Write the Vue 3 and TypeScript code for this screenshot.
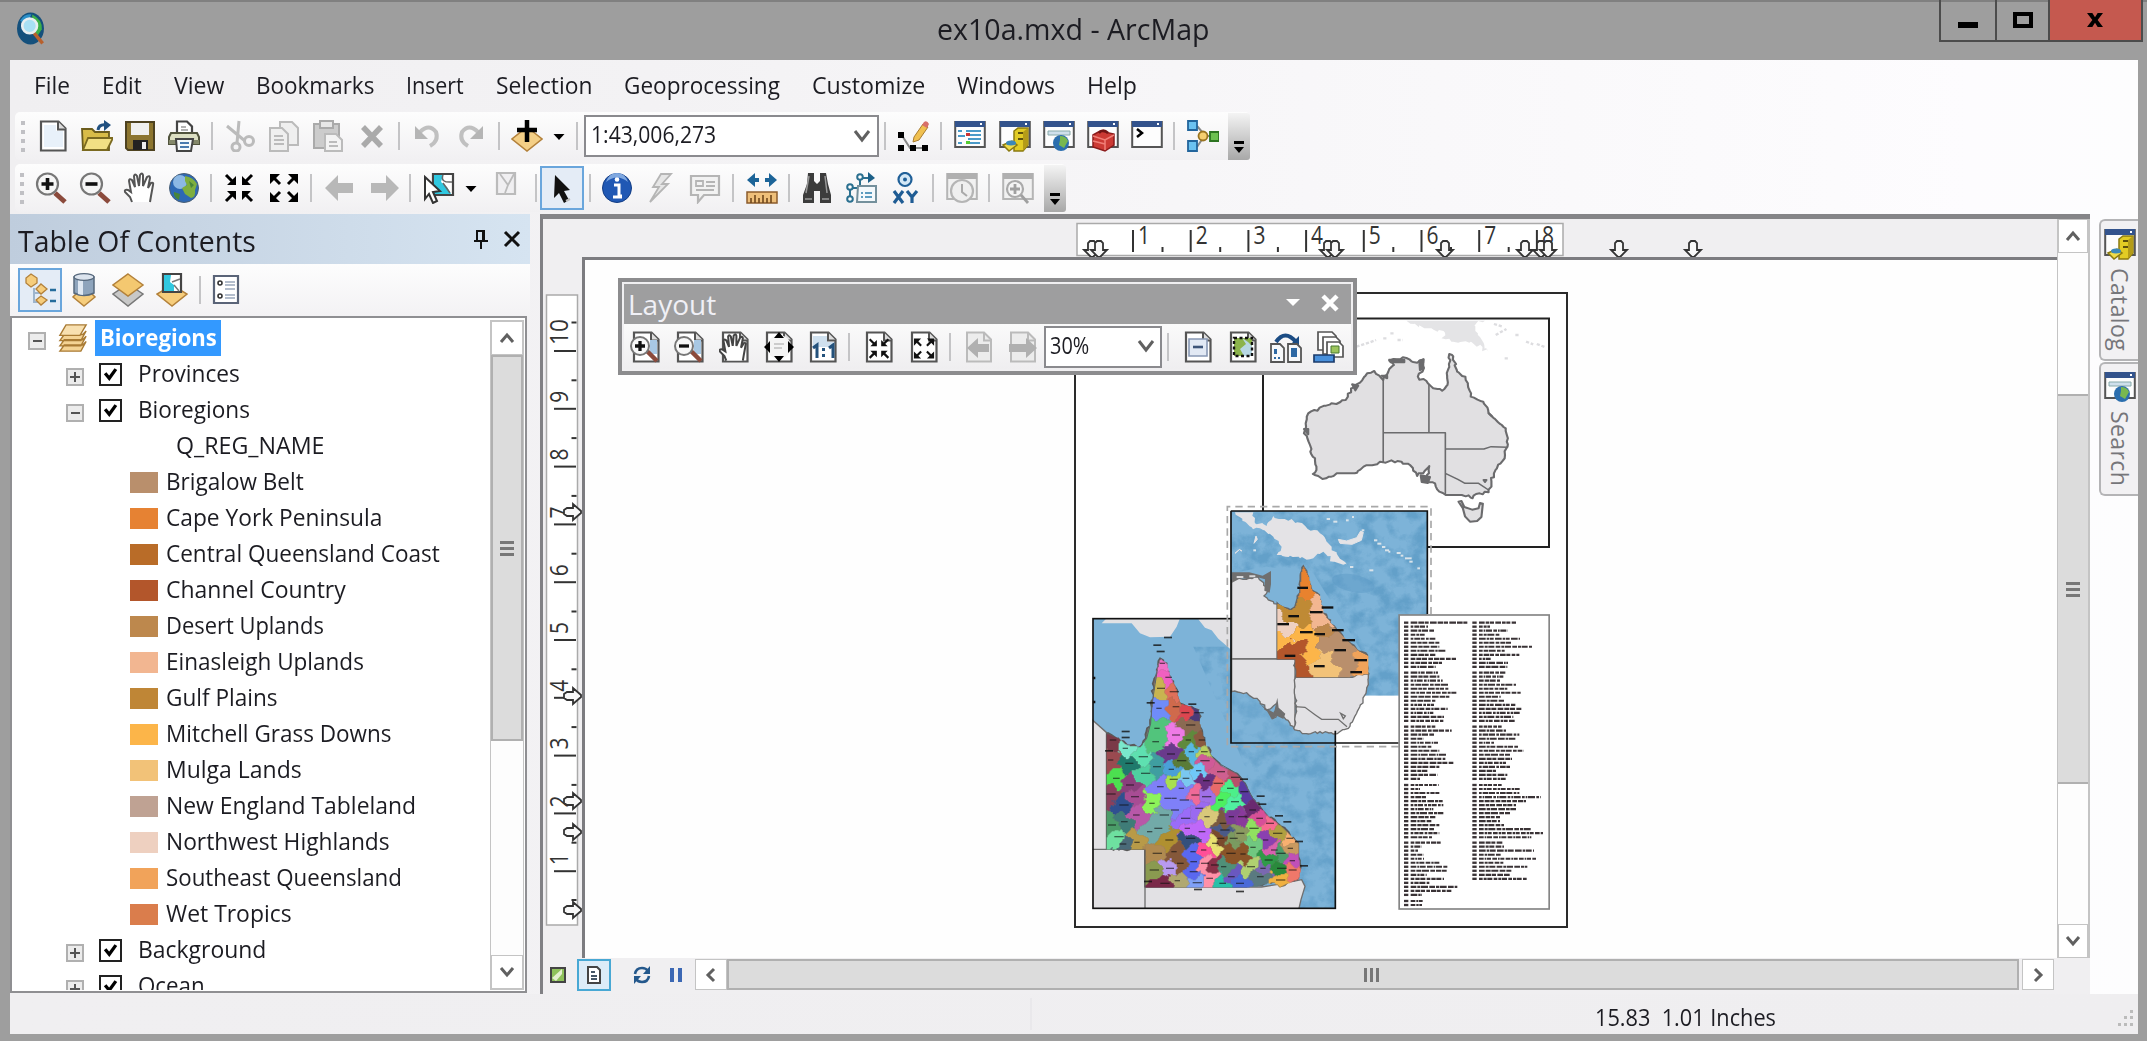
<script setup lang="ts">
type Item = [string, number]
type Pt = [number, number]
type Seed = [number, number, string]

// Squeezes a label horizontally so that it takes exactly the given width.
const vFit = {
  mounted(el: HTMLElement, b: { value: number }) {
    const w = el.offsetWidth
    if (w) el.style.transform = `scaleX(${b.value / w})`
  },
}

const menus: Item[] = [
  ['File', 36], ['Edit', 40], ['View', 50], ['Bookmarks', 118], ['Insert', 58],
  ['Selection', 96], ['Geoprocessing', 156], ['Customize', 113], ['Windows', 98], ['Help', 50],
]

const page = '<path d="M4 1.5h17.500l7 7V30.500H4z" fill="#fff" stroke="#555" stroke-width="2.200"/><path d="M21 1.500v8h8" fill="#ddd" stroke="#555" stroke-width="2"/>'
const greyPage = '<path d="M4 1.500h17l7 7V30.500H4z" fill="#ececec" stroke="#bbb" stroke-width="2"/><path d="M21 1.500v8h7" fill="none" stroke="#bbb" stroke-width="2"/>'
const win = '<path d="M1.200 2h29.600v25H1.200z" fill="#fdfdfd" stroke="#555" stroke-width="2"/><path d="M1 1h30v6H1z" fill="#33538c"/><path d="M26 3h2v2h-2z" fill="#fff"/>'
const greyWin = '<path d="M1.200 2h29.600v25H1.200z" fill="#f1f1f1" stroke="#b5b5b5" stroke-width="2"/><path d="M1 1h30v6H1z" fill="#b0b0b0"/>'
const inArrows = (c: string) => `<g fill="${c}" stroke="${c}"><path d="M13 4v9H4z M19 4v9h9z M13 28v-9H4z M19 28v-9h9z" stroke="none"/><path d="M3 3l8 8M29 3l-8 8M3 29l8-8M29 29l-8-8" stroke-width="3"/></g>`
const outArrows = (c: string) => `<g fill="${c}" stroke="${c}"><path d="M2 2h10L2 12z M30 2H20l10 10z M2 30h10L2 20z M30 30H20l10-10z" stroke="none"/><path d="M4 4l8 8M28 4l-8 8M4 28l8-8M28 28l-8-8" stroke-width="3"/></g>`
const glass = (p: string) => `<path d="M20 21l10 9" stroke="#8b4a3c" stroke-width="5"/><circle cx="12.500" cy="12" r="10.500" fill="#f6f6f6" stroke="#777" stroke-width="2.200"/><path d="${p}" stroke="#111" stroke-width="3.600"/>`
const pageGlass = (p: string) => `<path d="M20 9h7v14h-7z" fill="#a8c8e4"/><path d="M17 20l10 10" stroke="#8b4a3c" stroke-width="4.500"/><circle cx="10" cy="15" r="9" fill="#f8f8f8" stroke="#777" stroke-width="2"/><path d="${p}" stroke="#111" stroke-width="3.300"/>`
const handShape = 'M9 30L7 25L2 20q-1-3 3-2l3 2L6 9q0-3 3-1l3 7L11 4q1-3 3 0l2 10L17 3q2-3 3 0v11L24 5q3-2 3 1L25 16L28 11q3-1 2 2L28 24l-1 6'
const globe = '<circle cx="16" cy="16" r="14.500" fill="#2d68b4" stroke="#4a5f74"/><circle cx="12" cy="10" r="7" fill="#a4ccf0" opacity=".8"/><path d="M17 4q8 1 12 8l-2 6q1 7-4 8l-6-4-3-6 5-3-2-4z" fill="#7eae3e"/><path d="M6 20l6 2-1 6q-6-3-5-8zM21 9l5 4-3 3z" fill="#48853a"/>'
const cabinet = '<path d="M15 11l4-3h10v17l-5 6h-9z" fill="#e2cc24" stroke="#8a7a10" stroke-width="1.500"/><path d="M19 13h5M19 19h5" stroke="#5c500c" stroke-width="2"/><path d="M24 12l5-4v17l-5 6z" fill="#b49c18"/><path d="M4 25l9-4 5 4-8 6z" fill="#f0dc48" stroke="#8a7a10" stroke-width="1.500"/><ellipse cx="12" cy="23" rx="5" ry="2.500" fill="#3c88b8"/>'
const smallGlobe = '<circle cx="18" cy="23" r="8" fill="#2c6fae"/><path d="M17 16q6 0 8 5l-4 7-5-3 1-5z" fill="#78b850"/>'

const icons: Record<string, string> = {
  new: page + '<path d="M7 5h12v6h7v16H7z" fill="#e8f1fa"/>',
  open: '<path d="M1 9h10l3 3h14v18H2z" fill="#d8bc48" stroke="#6b5c1c" stroke-width="1.800"/><path d="M7 18h25l-6 12H2z" fill="#f2e084" stroke="#7b6a20" stroke-width="1.800"/><path d="M17 10q1-6 8-5" fill="none" stroke="#205080" stroke-width="3"/><path d="M23 0l7 5-7 6z" fill="#205080"/>',
  save: '<path d="M2 2h28v28H4l-2-2z" fill="#8c7530" stroke="#4e4220" stroke-width="2"/><path d="M7 3h18v12H7z" fill="#f0f0ee"/><path d="M9 20h15v10H9z" fill="#222"/><path d="M18 22h4v7h-4z" fill="#eee"/>',
  print: '<path d="M9 13V1.500h10l5 5V13" fill="#fff" stroke="#444" stroke-width="2.200"/><path d="M13 7h5M13 10h7" stroke="#999" stroke-width="1.500"/><path d="M3 13h26l2 4v7H1v-7z" fill="#dcdfc2" stroke="#50533c" stroke-width="2"/><path d="M1 20h30v4H1z" fill="#84886a"/><path d="M8 19h17l-2 12H9z" fill="#f6fafd" stroke="#444" stroke-width="2"/><path d="M12 23h9M12 27h9" stroke="#4a7bb0" stroke-width="2"/>',
  cut: '<g fill="none" stroke="#bbb" stroke-width="3"><path d="M3 6l18 15M15 1l-2 22"/><circle cx="12" cy="27" r="4"/><circle cx="25" cy="21" r="4.500"/></g>',
  copy: '<g fill="#efefef" stroke="#bbb" stroke-width="2"><path d="M12 2h12l6 6v17H12z"/><path d="M2 8h12l6 6v17H2z"/><path d="M6 16h9M6 20h10M6 24h10"/></g>',
  paste: '<path d="M2 4h25v24H2z" fill="#ccc" stroke="#aaa" stroke-width="2"/><path d="M8 1h13v7H8z" fill="#e8e8e8" stroke="#aaa" stroke-width="2"/><path d="M13 14h11l6 6v11H13z" fill="#f3f3f3" stroke="#bbb" stroke-width="2"/><path d="M17 22h8M17 26h9" stroke="#bbb" stroke-width="2"/>',
  del: '<path d="M7 7l18 19M25 7L7 26" stroke="#aaa" stroke-width="5.500"/>',
  undo: '<path d="M9 12q9-9 16 0q3 9-6 14" fill="none" stroke="#c0c0c0" stroke-width="4"/><path d="M4 6v13h13z" fill="#b5b5b5"/>',
  redo: '<path d="M23 12q-9-9-16 0q-3 9 6 14" fill="none" stroke="#c0c0c0" stroke-width="4"/><path d="M28 6v13H15z" fill="#b5b5b5"/>',
  add: '<path d="M16 7l15 12-15 12L1 19z" fill="#f4cf86" stroke="#b3813a" stroke-width="1.500"/><path d="M16 0v22M6 10h20" stroke="#000" stroke-width="4.500"/>',
  drop: '<path d="M10.500 14h11l-5.500 6z" fill="#000"/>',
  edit: '<path d="M4 14l9 14h16" fill="none" stroke="#888" stroke-width="2"/><path d="M1 12h6v6H1zM1 25h6v6H1zM13 25h6v6h-6zM25 25h6v6h-6z" fill="#000"/><path d="M17 17l9-13 5 3-9 13-6 2z" fill="#f0c050" stroke="#a87c30"/><path d="M27 2q3-2 5 2l-2 4-5-3z" fill="#d8706a"/>',
  toc: win + '<path d="M4 11h4M4 16h7M4 23h4" stroke="#4a9ac8" stroke-width="2"/><path d="M12 11h15M14 15h13M14 19h13M14 23h12" stroke="#4a9ac8" stroke-width="1.800"/><path d="M12 13h4v3h-4z" fill="#c33"/><path d="M12 21h4v3h-4z" fill="#5c3"/>',
  catalog: win + cabinet,
  search: win + '<path d="M5 11h22v4H5z" fill="#cfe0ec" stroke="#8aa" />' + smallGlobe,
  toolbox: win + '<path d="M6 15l7-4 14 3v11l-9 6-12-4z" fill="#cc3a34" stroke="#8c1c1c" stroke-width="1.500"/><path d="M6 16l12 4 9-5M18 20v10M6 21l12 3" fill="none" stroke="#f08078" stroke-width="1.500"/><path d="M12 13q4-5 9 0" fill="none" stroke="#701414" stroke-width="2.500"/>',
  python: win + '<path d="M6 9l5 4-5 4" fill="none" stroke="#000" stroke-width="2.500"/>',
  model: '<path d="M10 6l6 7M10 27l6-9M18 16h8" stroke="#888" stroke-width="2"/><path d="M1 1h9v9H1zM1 21h9v10H1z" fill="#6bc2f0" stroke="#22659c" stroke-width="1.800"/><circle cx="16" cy="16" r="4.500" fill="#f5cf70" stroke="#9a7420" stroke-width="1.800"/><path d="M23 12h9v9h-9z" fill="#6cc050" stroke="#2c7420" stroke-width="1.800"/>',
  zin: glass('M12.500 6v12M6.500 12h12'),
  zout: glass('M6.500 12h12'),
  hand: `<path d="${handShape}" fill="#fff" stroke="#555" stroke-width="2"/>`,
  globe,
  fixin: inArrows('#000'),
  fixout: outArrows('#000'),
  back: '<path d="M1 16L14 3v8h15v10H14v8z" fill="#b8b8b8"/>',
  fwd: '<path d="M31 16L18 3v8H3v10h15v8z" fill="#b8b8b8"/>',
  selfeat: '<path d="M10 2h20v21H10z" fill="#fff" stroke="#444" stroke-width="2.200"/><path d="M11 3h9l-2 7 6 5 4 7H11z" fill="#30c8e0"/><path d="M20 3q-3 8 9 7M20 11l7 10" fill="none" stroke="#666" stroke-width="1.500"/><path d="M2 5l15 14-7 1 4 9-4 2-4-9-4 5z" fill="#fff" stroke="#333" stroke-width="2"/>',
  clear: '<path d="M7 1h18v21H7z" fill="#f0eff1" stroke="#bbb" stroke-width="2.200"/><path d="M10 2l8 11 6-11M18 13l-3 8" fill="none" stroke="#bbb" stroke-width="1.800"/>',
  cursor: '<path d="M9 3l15 15-6 1 5 9-5 3-5-10-5 5z" fill="#111"/><path d="M20 29l4-2" stroke="#bbb" stroke-width="2"/>',
  info: '<circle cx="16" cy="16" r="14.500" fill="#2058b4" stroke="#123c84"/><path d="M5 10q11-9 22 0-3-9-11-9T5 10" fill="#7fa8e0"/><path d="M13 13h5v11h3M12 25h9" fill="none" stroke="#fff" stroke-width="3"/><circle cx="16" cy="7.500" r="2.300" fill="#fff"/>',
  bolt: '<path d="M26 2H16L8 15h6L5 30l18-18h-6z" fill="#e6e6e6" stroke="#b5b5b5" stroke-width="1.800"/>',
  popup: '<path d="M2 4h28v19H15l-6 7v-7H2z" fill="#f2f2f2" stroke="#b5b5b5" stroke-width="2.200"/><path d="M7 9h7v5H7zM17 10h9M17 14h9M7 18h18" fill="none" stroke="#b5b5b5" stroke-width="1.800"/>',
  measure: '<path d="M1 20h30v11H1z" fill="#eebf7a" stroke="#8c5c2c" stroke-width="1.500"/><path d="M5 31v-5M9 31v-8M13 31v-5M17 31v-8M21 31v-5M25 31v-8" stroke="#70481c" stroke-width="1.600"/><path d="M1 8l8-7v5h4v4H9v5zM31 8l-8-7v5h-4v4h4v5z" fill="#1c6498"/>',
  find: '<path d="M7 1h6v8l3 3 3-3V1h6l2 11 3 11v8H19V19h-6v12H2v-8l4-11z" fill="#3c3c3c"/><path d="M8 4l-3 17M24 4l2 17M4 27h7M21 27h7" stroke="#999" stroke-width="1.500"/>',
  route: '<path d="M4 25v-9h10V6h9" fill="none" stroke="#2b7090" stroke-width="2"/><path d="M22 0l7 6-7 5z" fill="#1c6088"/><g fill="#fff" stroke="#2b7090" stroke-width="2"><circle cx="4" cy="15" r="2.800"/><circle cx="4" cy="27" r="2.800"/><circle cx="14" cy="5" r="2.800"/></g><path d="M12 14h18v16H11z" fill="#f4f9fc" stroke="#74909c" stroke-width="2"/><path d="M15 21h2M19 21h7M15 25h2M19 25h7" stroke="#5c9cc0" stroke-width="2"/>',
  xy: '<circle cx="16" cy="7.500" r="6.500" fill="#d4e8f6" stroke="#206098" stroke-width="2.200"/><circle cx="16" cy="7.500" r="2" fill="#206098"/><path d="M5 19l9 12M14 19L5 31M18 19l5 6 5-6M23 25v6" fill="none" stroke="#1f5c94" stroke-width="3.200"/>',
  time: greyWin + '<circle cx="16" cy="19" r="11" fill="#efefef" stroke="#b5b5b5" stroke-width="2.200"/><path d="M16 12v8l5 4" fill="none" stroke="#aaa" stroke-width="2"/>',
  viewer: greyWin + '<circle cx="13" cy="17" r="8" fill="#f4f4f4" stroke="#aaa" stroke-width="2.200"/><path d="M13 12v10M8 17h10M19 23l7 8" stroke="#a0a0a0" stroke-width="2.800"/>',
  tlist: '<path d="M11 15v14h10M11 20h8" fill="none" stroke="#9db4cc" stroke-width="2"/><g fill="#f6cd7c" stroke="#b3813a" stroke-width="1.300"><path d="M8 1l6 4v5l-6 4-5-4V5zM18 11l6 5-6 5-5-5zM18 23l6 4-6 5-5-5z"/></g><path d="M27 17h6M27 28h6" stroke="#246c9c" stroke-width="2.600"/>',
  tsource: '<path d="M16 33l11-9-4-4H9l-4 4z" fill="#f6cd7c" stroke="#b3813a" stroke-width="1.500"/><path d="M6 4v16q10 5 20 0V4z" fill="#8ea4bc" stroke="#56687c" stroke-width="1.500"/><path d="M10 6v15q3 1 5 1V6z" fill="#dfe8f2"/><ellipse cx="16" cy="4" rx="10" ry="3.300" fill="#dce4ee" stroke="#56687c" stroke-width="1.300"/>',
  tvis: '<path d="M16 11l15 10-15 12L1 21z" fill="#c8c8c8" stroke="#777" stroke-width="1.500"/><path d="M16 1l15 11-15 11L1 12z" fill="#f4c870" stroke="#b3813a" stroke-width="1.500"/>',
  tsel: '<path d="M16 12l15 9-15 12L1 21z" fill="#f6cd7c" stroke="#b3813a" stroke-width="1.500"/><path d="M7 1h18v18H7z" fill="#fff" stroke="#444" stroke-width="2.200"/><path d="M8 2h7l-1 7 4 3v6H8z" fill="#30c8e0"/><path d="M16 9l8-3M18 12l5 6" stroke="#777" stroke-width="1.500"/>',
  topt: '<path d="M4 3h24v27H4z" fill="#fff" stroke="#5a6478" stroke-width="2.200"/><g fill="none" stroke="#333" stroke-width="1.600"><circle cx="10" cy="10" r="2"/><circle cx="10" cy="23" r="2"/></g><path d="M15 9h10M15 12h10M15 16h10M15 22h10M15 25h10" stroke="#9aa8bc" stroke-width="1.600"/>',
  pzin: page + pageGlass('M10 10v10M5 15h10'),
  pzout: page + pageGlass('M5 15h10'),
  phand: page + `<g transform="translate(-1 2) scale(.92)"><path d="${handShape}" fill="#fff" stroke="#444" stroke-width="2.200"/></g>`,
  pfull: page + '<circle cx="16" cy="16" r="12" fill="#f4f4f4"/><path d="M16 1l5 6H11zM16 31l5-6H11zM1 16l6-6v12zM31 16l-6-6v12z" fill="#000"/><path d="M11 13h10M11 17h8" stroke="#ccc" stroke-width="2"/>',
  p11: page + '<path d="M6 5h14v6h6v5H6z" fill="#cfe0ee"/><path d="M6 17l4-3v13M22 17l4-3v13" fill="none" stroke="#24527c" stroke-width="3"/><path d="M15 17h3v3h-3zM15 23h3v3h-3z" fill="#24527c"/>',
  pin: page + '<g transform="translate(4.500 6) scale(.72)">' + inArrows('#111') + '</g>',
  pout: page + '<g transform="translate(4.500 6) scale(.72)">' + outArrows('#111') + '</g>',
  pback: greyPage + '<path d="M4 17L15 7v6h11v8H15v6z" fill="#b0b0b0"/>',
  pfwd: greyPage + '<path d="M30 17L19 7v6H2v8h17v6z" fill="#b0b0b0"/>',
  pdraft: page + '<path d="M7 8h18v17H7z" fill="#e2e9f4" stroke="#8898b4" stroke-width="1.600"/><path d="M11 16h10" stroke="#3c5478" stroke-width="2.600"/>',
  pfocus: page + '<path d="M7 7h18v18H7z" fill="#8cb44c"/><path d="M15 7l4 6-6 5 4 7h8V15l-4-4z" fill="#b8d8e4"/><path d="M7 7h18v18H7z" fill="none" stroke="#111" stroke-width="2.400" stroke-dasharray="3 2.500"/>',
  pchange: '<path d="M6 11q9-13 20 0" fill="none" stroke="#1b4c84" stroke-width="4"/><path d="M29 5v10h-10z" fill="#1b4c84"/><path d="M1 13h9l4 4v14H1zM18 13h9l4 4v14H18z" fill="#f6f8fa" stroke="#555" stroke-width="1.800"/><path d="M4 18h3v5H4zM4 26h2v2H4zM8 26h2v2H8zM21 17h6v9h-6z" fill="#2c68a4"/>',
  pddp: '<path d="M5 1h14l4 4v14H5z" fill="#fff" stroke="#555" stroke-width="1.700"/><path d="M10 6h13l4 4v13H10z" fill="#fff" stroke="#555" stroke-width="1.700"/><path d="M14 11h12l4 4v11H14z" fill="#fff" stroke="#555" stroke-width="1.700"/><path d="M18 15h8v7h-8z" fill="#9cc45c" stroke="#487830"/><path d="M1 24h20v7H1z" fill="#4890dc" stroke="#1c3c6c" stroke-width="1.700"/>',
  layers: '<g fill="#f4d394" stroke="#a97b34" stroke-width="1.600"><path d="M1 31l5-7h21l4-4-6 11zM1 25l5-7h21l4-4-6 11zM1 19l5-7h21l4-4-6 11z"/><path d="M1 13L8 1h23l-7 12z" fill="#f8e0b0"/></g>',
}

const standard: Item[] = [
  ['new', 44], ['open', 43], ['save', 44], ['print', 44], ['|', 11], ['cut', 45], ['copy', 44], ['paste', 44], ['del', 44], ['|', 10],
  ['undo', 45], ['redo', 44], ['|', 12], ['add', 44], ['drop', 20], ['|', 15],
]
const standard2: Item[] = [
  ['|', 12], ['edit', 44], ['|', 12], ['toc', 46], ['catalog', 44], ['search', 44], ['toolbox', 44], ['python', 44], ['|', 10], ['model', 47],
]
const tools: Item[] = [
  ['zin', 44], ['zout', 44], ['hand', 44], ['globe', 46], ['|', 8], ['fixin', 48], ['fixout', 42], ['|', 12], ['back', 46], ['fwd', 41], ['|', 12],
  ['selfeat', 46], ['drop', 18], ['clear', 52], ['|', 8], ['cursor*', 44], ['|', 12], ['info', 42], ['bolt', 45], ['popup', 44], ['|', 12], ['measure', 45], ['|', 9],
  ['find', 47], ['route', 43], ['xy', 44], ['|', 12], ['time', 45], ['|', 10], ['viewer', 48],
]
const tocTools: Item[] = [['tlist*', 44], ['tsource', 44], ['tvis', 44], ['tsel', 44], ['|', 11], ['topt', 44]]
const layoutA: Item[] = [
  ['pzin', 44], ['pzout', 44], ['phand', 45], ['pfull', 44], ['p11', 44], ['|', 8], ['pin', 51], ['pout', 39], ['|', 14], ['pback', 44], ['pfwd', 43],
]
const layoutB: Item[] = [['|', 12], ['pdraft', 48], ['pfocus', 42], ['pchange', 43], ['pddp', 44]]

const regions: [string, string, number][] = [
  ['Brigalow Belt', '#b98f6c', 138], ['Cape York Peninsula', '#e68233', 216], ['Central Queensland Coast', '#b96c28', 274],
  ['Channel Country', '#b3562b', 180], ['Desert Uplands', '#bd884d', 158], ['Einasleigh Uplands', '#f2b691', 198],
  ['Gulf Plains', '#bf8636', 112], ['Mitchell Grass Downs', '#fcb549', 226], ['Mulga Lands', '#f2c278', 136],
  ['New England Tableland', '#bfa293', 250], ['Northwest Highlands', '#eed0c0', 224], ['Southeast Queensland', '#f1a35a', 236],
  ['Wet Tropics', '#da7d4c', 126],
]

const hTicks = Array.from({ length: 8 }, (_, i) => ({ n: i + 1, x: 1133 + i * 57.7 }))
const vTicks = Array.from({ length: 10 }, (_, i) => ({ n: 10 - i, y: 351 + i * 57.8 }))
const hMarks = [1092, 1099, 1328, 1335, 1445, 1525, 1541, 1548, 1619, 1693]
const vMarks = [512, 696, 801, 832, 910]

// Deterministic noise, so the map is the same on every load.
function rng(seed: number) {
  let s = seed
  return () => ((s = (s * 16807) % 2147483647) / 2147483647)
}
function pts(s: string): Pt[] {
  return s.trim().split(/\s+/).map((p) => p.split(',').map(Number) as Pt)
}
// Roughens a closed outline into a coastline.
function coast(s: string, amp = 5, seed = 7): string {
  const r = rng(seed)
  const p = pts(s)
  let d = ''
  p.forEach((a, i) => {
    const b = p[(i + 1) % p.length]
    const len = Math.hypot(b[0] - a[0], b[1] - a[1])
    const straight = a[0] === b[0] || a[1] === b[1]
    const n = straight ? 1 : Math.max(1, Math.round(len / 9))
    for (let k = 0; k < n; k++) {
      const j = k ? amp : 0
      const x = a[0] + ((b[0] - a[0]) * k) / n + (r() - 0.5) * 2 * j
      const y = a[1] + ((b[1] - a[1]) * k) / n + (r() - 0.5) * 2 * j
      d += (d ? 'L' : 'M') + x.toFixed(0) + ' ' + y.toFixed(0)
    }
  })
  return d + 'Z'
}
function inside(x: number, y: number, p: Pt[]): boolean {
  let c = false
  for (let i = 0, j = p.length - 1; i < p.length; j = i++) {
    if (p[i][1] > y !== p[j][1] > y && x < ((p[j][0] - p[i][0]) * (y - p[i][1])) / (p[j][1] - p[i][1]) + p[i][0]) c = !c
  }
  return c
}
// Fills an outline with cells coloured by the nearest region centre,
// bending the borders with smooth waves and a little grain.
function mosaic(outline: string, seeds: Seed[], step: number, noise: number) {
  const p = pts(outline)
  const r = rng(99)
  const xs = p.map((q) => q[0])
  const ys = p.map((q) => q[1])
  const out: Record<string, string> = {}
  for (let y = Math.min(...ys); y < Math.max(...ys); y += step) {
    let run = ''
    let start = 0
    for (let x = Math.min(...xs); x <= Math.max(...xs) + step; x += step) {
      let c = ''
      if (inside(x, y, p)) {
        const dx = noise * (Math.sin(y / 9 + x / 31) * 0.5 + Math.sin(y / 4.3) * 0.25 + (r() - 0.5) * 0.3)
        const dy = noise * (Math.sin(x / 8 + y / 27) * 0.5 + Math.sin(x / 4.7) * 0.25 + (r() - 0.5) * 0.3)
        let best = 1e9
        for (const s of seeds) {
          const d = (s[0] - x - dx) ** 2 + (s[1] - y - dy) ** 2
          if (d < best) { best = d; c = s[2] }
        }
      }
      if (c !== run) {
        if (run) out[run] = (out[run] || '') + `M${start} ${y}H${x}v${step + 0.5}H${start}z`
        run = c
        start = x
      }
    }
  }
  return Object.entries(out)
}

const ausOutline = coast('905,540 880,513 860,520 840,548 815,565 800,600 745,617 695,640 688,670 683,700 700,735 708,770 718,800 708,822 735,837 760,830 775,820 825,820 850,800 905,787 945,783 980,795 1000,828 1034,798 1025,845 1050,850 1062,875 1080,885 1125,885 1155,895 1175,880 1200,877 1215,820 1245,775 1253,740 1248,685 1205,645 1185,605 1150,590 1135,530 1112,515 1098,465 1090,462 1085,555 1070,572 1045,565 1030,550 1002,530 1015,515 1018,478 1000,488 960,472 922,482 935,495 915,525', 4)
const ausPng = coast('970,362 1190,362 1160,375 1170,400 1200,457 1150,425 1115,428 1068,415 1078,398 1020,385', 6, 3)

const qldOutline = '300,505 320,520 330,560 345,590 360,640 395,650 415,660 420,710 435,760 455,800 480,825 530,850 555,880 575,920 600,950 620,975 665,1010 690,1035 715,1060 715,1100 720,1140 715,1165 680,1180 660,1190 640,1175 600,1185 560,1190 255,1190 255,1078 140,1075 140,730 175,745 200,765 240,770 258,745 270,700 275,650 282,590 290,540'
const qldSeeds: Seed[] = [
  [310, 520, '#f070c8'], [325, 562, '#f060c0'], [298, 595, '#c8b450'], [340, 605, '#e0705a'], [298, 655, '#6f8cf8'], [345, 650, '#cf6a4c'],
  [375, 668, '#dc4650'], [412, 668, '#4b3a78'], [290, 715, '#52c47c'], [288, 755, '#52c47c'], [345, 735, '#ee7ae6'], [385, 705, '#8a6a52'],
  [388, 750, '#5f8a3c'], [425, 750, '#8a5a40'], [328, 792, '#6a3a8c'], [362, 812, '#5a7c38'], [395, 785, '#58b8e0'], [430, 785, '#b8d060'],
  [290, 830, '#3f9ea0'], [245, 800, '#5ee0b0'], [195, 775, '#7ae8cc'], [160, 750, '#7a3a48'], [205, 820, '#1f7a6c'], [250, 850, '#4fd0a0'],
  [155, 810, '#9a4a50'], [168, 865, '#4ce050'], [205, 885, '#8a3f7c'], [150, 912, '#8a3f5c'], [335, 838, '#4aa0d8'], [375, 865, '#7ac8f0'],
  [340, 868, '#a8e050'], [430, 812, '#d05a98'], [415, 842, '#70c8f8'], [440, 872, '#6a3080'], [480, 845, '#cf5f90'], [520, 862, '#b8506a'],
  [345, 925, '#7f80f8'], [300, 890, '#7f80f8'], [340, 960, '#7f80f8'], [370, 930, '#7f80f8'], [365, 895, '#7f80f8'], [320, 925, '#7f80f8'], [405, 915, '#ef6a98'], [435, 920, '#a070e8'], [275, 940, '#8cf45a'], [230, 975, '#b858a8'],
  [222, 920, '#a84c94'], [185, 945, '#2f4f90'], [485, 930, '#4cf060'], [510, 895, '#4cf08a'], [520, 935, '#50f0a0'], [545, 980, '#8a3a9c'], [515, 980, '#7a3a98'],
  [575, 960, '#6a2a70'], [552, 905, '#5a3aa0'], [470, 880, '#e86a6a'], [440, 980, '#d8c87a'], [490, 1000, '#7a5a40'], [415, 955, '#9a6af0'],
  [370, 985, '#9a6cf8'], [385, 1015, '#bf68f8'], [425, 1025, '#bf68f8'], [290, 1015, '#72aaa8'], [310, 975, '#72aaa8'], [270, 1025, '#72aaa8'], [190, 995, '#3f7c78'], [155, 1005, '#4a9c68'], [172, 1040, '#6ee0a0'],
  [230, 1057, '#b89a48'], [190, 1062, '#4a6a78'], [325, 1050, '#b09030'], [285, 1090, '#b08a50'], [345, 1085, '#85583a'], [360, 1120, '#85583a'], [325, 1135, '#b89af0'],
  [280, 1140, '#8a9a50'], [400, 1085, '#5a68f0'], [398, 1115, '#5a68f0'], [400, 1145, '#5a68f0'], [387, 1045, '#34507c'], [430, 1080, '#ff4f98'], [450, 1165, '#ff90a8'], [432, 1120, '#ff90a8'], [405, 1178, '#7fa0f8'],
  [355, 1172, '#b0a870'], [465, 1060, '#e8e070'], [460, 1125, '#8a3048'], [510, 1090, '#8a5428'], [550, 1092, '#8a5428'], [480, 1045, '#7a4a2c'], [520, 1045, '#7a9a60'],
  [490, 1020, '#4a5a88'], [490, 1130, '#4f9078'], [515, 1160, '#6a58c0'], [570, 1130, '#b0d070'], [575, 1015, '#90e060'], [620, 1050, '#8a40b0'], [598, 985, '#d84f98'],
  [625, 1000, '#f86a90'], [650, 1030, '#b0a040'], [580, 1072, '#70c880'], [640, 1080, '#d860b0'], [625, 1110, '#2f9a48'], [660, 1135, '#2a8a3c'],
  [690, 1075, '#c89a60'], [690, 1045, '#f8b070'], [695, 1140, '#f0786a'], [655, 1170, '#f0b040'], [700, 1112, '#c050b8'], [600, 1160, '#5a7a80'],
  [535, 1180, '#4a6ad8'], [660, 1090, '#4c9c6c'], [610, 1135, '#7a68b0'], [485, 1180, '#28c0a8'], [540, 1030, '#8a9a60'], [310, 1180, '#7a2848'],
]
const qldCells = mosaic(qldOutline, qldSeeds, 3, 13)
const qldEdge = coast(qldOutline, 5, 21)

const bioOutline = '730,228 745,260 755,300 778,315 790,370 830,420 865,455 900,485 922,495 925,550 885,555 860,560 707,560 705,507 652,507 652,340 690,360 705,350 720,300 722,250'
const bioSeeds: Seed[] = [
  [735, 260, '#e8822e'], [735, 300, '#e8822e'], [768, 340, '#f2b691'], [790, 385, '#f2b691'], [765, 390, '#f2b691'], [735, 350, '#bf8a35'], [690, 375, '#bf8a35'], [730, 390, '#bf8a35'],
  [685, 420, '#efd0c0'], [660, 400, '#efd0c0'], [720, 430, '#fcb549'], [665, 445, '#fcb549'], [755, 460, '#fcb549'], [745, 430, '#fcb549'], [680, 490, '#b3562b'], [725, 530, '#b3562b'], [720, 470, '#b3562b'],
  [775, 530, '#f2c278'], [795, 505, '#f2c278'], [815, 545, '#f2c278'], [755, 500, '#fcb549'], [785, 425, '#bd884d'], [830, 440, '#b98f6c'], [855, 480, '#b98f6c'], [870, 520, '#b98f6c'], [830, 500, '#b98f6c'], [790, 460, '#b98f6c'],
  [908, 510, '#f1a35a'], [905, 540, '#f1a35a'], [860, 548, '#b98f6c'],
]
const bioCells = mosaic(bioOutline, bioSeeds, 3, 12)
const bioEdge = coast(bioOutline, 4, 11)
const bioLabels: Pt[] = [[730, 293], [803, 352], [768, 366], [703, 378], [670, 402], [738, 426], [781, 432], [834, 420], [865, 450], [692, 497], [841, 480], [901, 510], [780, 528], [889, 546]]
const extraLabels: Pt[] = [[322, 440], [290, 463], [300, 482], [195, 722], [195, 740], [600, 916], [655, 975], [680, 993], [550, 865], [715, 1052], [730, 1125], [538, 1202], [412, 1196], [262, 1172], [605, 940], [270, 636], [395, 640], [145, 780]]
const nt = coast('515,270 530,265 560,268 595,262 625,300 612,318 652,342 652,507 515,507', 4, 5)
const sa = coast('515,507 705,507 705,720 690,700 655,660 640,685 650,640 620,660 600,635 560,608 515,605', 5, 9)
const nsw = coast('707,562 865,562 900,552 925,552 918,610 890,670 865,715 820,732 780,725 745,732 705,720', 4, 13)
const png = coast('525,67 580,67 585,100 620,108 640,78 700,92 780,130 815,170 830,190 862,226 820,215 790,185 750,208 720,205 650,195 665,170 640,140 600,115 575,112 555,95', 5, 17)
const isles: [number, number, number][] = [
  [800, 84, 10], [820, 92, 12], [858, 88, 8], [876, 78, 6], [905, 118, 8], [942, 148, 10], [952, 158, 12], [966, 168, 10], [975, 178, 12],
  [1010, 186, 12], [1022, 194, 8], [1035, 202, 20], [1048, 212, 10], [985, 182, 6], [1072, 232, 8], [928, 238, 12], [870, 228, 10], [580, 178, 8],
]

const rowsA = [
  [1224, 1104, 1122, 1094, 1126, 1138, 1138, 1156, 1126, 1188, 1146, 1127],
  [1134, 1138, 1148, 1168, 1165, 1192, 1168, 1126, 1122, 1163, 1120, 1152, 1150],
  [1126, 1175, 1122, 1090, 1134, 1114, 1138, 1162, 1156, 1180, 1138, 1102, 1132, 1080],
  [1136, 1080, 1138, 1098, 1150, 1150, 1120, 1150, 1126, 1114, 1138, 1122, 1138, 1116],
  [1146, 1084, 1074, 1090, 1092, 1142, 1162, 1160, 1100, 1152, 1110, 1192, 1174, 1086],
  [1092, 1086],
]
const rowsB = [
  [1368, 1290, 1344, 1318, 1380, 1356, 1416, 1334, 1378, 1296, 1344, 1342],
  [1336, 1330, 1320, 1368, 1342, 1382, 1322, 1332, 1366, 1384, 1380, 1360, 1366],
  [1326, 1338, 1378, 1366, 1302, 1374, 1390, 1350, 1356, 1338, 1350, 1308, 1342, 1338],
  [1326, 1380, 1378, 1442, 1398, 1368, 1368, 1350, 1320, 1320, 1332, 1416, 1450, 1414],
  [1328, 1332, 1422, 1324, 1428, 1332, 1402, 1356, 1350, 1402],
]
const groupY = [398, 548, 710, 885, 1058, 1233]
const legend = [rowsA, rowsB].flatMap((col, c) =>
  col.flatMap((g, gi) => g.map((end, k) => ({
    x: c ? 1237 : 1032, end, y: groupY[gi] + k * 12.05,
    dash: `${8 + ((end + k) % 5) * 3} 3 ${5 + (end % 7) * 2} 2 ${12 + (k % 4) * 3} 4`,
  }))))
</script>

<template>
  <div class="window">
    <header class="titlebar">
      <svg class="logo" viewBox="0 0 32 38">
        <ellipse cx="16" cy="19" rx="15.500" ry="18.500" fill="#14507c" />
        <path d="M18 3q12 6 11 17l-6 9-5-8z" fill="#3cb048" />
        <path d="M4 10q6-9 13-7l-6 12z" fill="#2c90c8" />
        <path d="M20 24l10 12" stroke="#b8602c" stroke-width="4" />
        <circle cx="15" cy="16" r="8.500" fill="#a8e0f4" stroke="#e8eef0" stroke-width="3" />
      </svg>
      <div class="title"><span v-fit="273" class="fit">ex10a.mxd - ArcMap</span></div>
      <div class="winbtns">
        <span class="wb min"><i></i></span>
        <span class="wb max"><i></i></span>
        <span class="wb close"><svg width="18" height="16" viewBox="0 0 20 18"><path d="M1 1h6l3 5 3-5h6l-6 8 6 8h-6l-3-5-3 5H1l6-8z" /></svg></span>
      </div>
    </header>

    <div class="body">
      <nav class="menu">
        <div v-for="m in menus" :key="m[0]" class="mi" :style="{ width: m[1] + 'px' }"><span v-fit="m[1]" class="fit">{{ m[0] }}</span></div>
      </nav>

      <div class="bars">
        <div class="toolbar first">
          <div class="grip"><i></i><i></i><i></i><i></i></div>
          <template v-for="(t, i) in standard" :key="i">
            <span v-if="t[0] === '|'" class="sep" :style="{ width: t[1] + 'px' }"></span>
            <span v-else class="tb" :style="{ width: t[1] + 'px' }"><svg viewBox="0 0 32 32" v-html="icons[t[0]]"></svg></span>
          </template>
          <div class="combo scale"><span v-fit="125" class="fit">1:43,006,273</span><svg width="18" height="14" viewBox="0 0 18 14"><path d="M2 2l7 9 7-9" /></svg></div>
          <template v-for="(t, i) in standard2" :key="i">
            <span v-if="t[0] === '|'" class="sep" :style="{ width: t[1] + 'px' }"></span>
            <span v-else class="tb" :style="{ width: t[1] + 'px' }"><svg viewBox="0 0 32 32" v-html="icons[t[0]]"></svg></span>
          </template>
          <div class="over"><svg width="14" height="16" viewBox="0 0 14 16"><path d="M2 1h10v3H2zM2 7h10l-5 6z" fill="#000" /></svg></div>
        </div>
        <div class="toolbar second">
          <div class="grip"><i></i><i></i><i></i><i></i></div>
          <template v-for="(t, i) in tools" :key="i">
            <span v-if="t[0] === '|'" class="sep" :style="{ width: t[1] + 'px' }"></span>
            <span v-else class="tb" :class="{ on: t[0].endsWith('*') }" :style="{ width: t[1] + 'px' }"><svg viewBox="0 0 32 32" v-html="icons[t[0].replace('*', '')]"></svg></span>
          </template>
          <div class="over"><svg width="14" height="16" viewBox="0 0 14 16"><path d="M2 1h10v3H2zM2 7h10l-5 6z" fill="#000" /></svg></div>
        </div>
      </div>

      <main class="main">
        <aside class="toc">
          <div class="tochead">
            <span v-fit="238" class="fit">Table Of Contents</span>
            <svg width="14" height="20" viewBox="0 0 14 20"><path d="M3 11V2h7v9M0 12h14M7 12v8M9 2v9" fill="none" stroke="#111" stroke-width="2" /></svg>
            <svg width="18" height="18" viewBox="0 0 18 18"><path d="M2 2l14 14M16 2L2 16" stroke="#111" stroke-width="3" /></svg>
          </div>
          <div class="toctools">
            <template v-for="(t, i) in tocTools" :key="i">
              <span v-if="t[0] === '|'" class="sep" :style="{ width: t[1] + 'px' }"></span>
              <span v-else class="tb" :class="{ on: t[0].endsWith('*') }" :style="{ width: t[1] + 'px' }"><svg viewBox="0 0 34 34" v-html="icons[t[0].replace('*', '')]"></svg></span>
            </template>
          </div>
          <div class="tree">
            <div class="rows">
              <div class="row root">
                <i class="exp"></i>
                <svg class="lay" viewBox="0 0 32 32" v-html="icons.layers"></svg>
                <div class="hl"><span v-fit="117" class="fit">Bioregions</span></div>
              </div>
              <div class="row lyr"><i class="exp plus"></i><i class="chk"><svg viewBox="0 0 23 23"><path d="M5 10l5 6 8-11" /></svg></i><span v-fit="102" class="fit">Provinces</span></div>
              <div class="row lyr"><i class="exp"></i><i class="chk"><svg viewBox="0 0 23 23"><path d="M5 10l5 6 8-11" /></svg></i><span v-fit="112" class="fit">Bioregions</span></div>
              <div class="row fld"><span v-fit="148" class="fit">Q_REG_NAME</span></div>
              <div v-for="r in regions" :key="r[0]" class="row cls"><i class="sw" :style="{ background: r[1] }"></i><span v-fit="r[2]" class="fit">{{ r[0] }}</span></div>
              <div class="row lyr"><i class="exp plus"></i><i class="chk"><svg viewBox="0 0 23 23"><path d="M5 10l5 6 8-11" /></svg></i><span v-fit="128" class="fit">Background</span></div>
              <div class="row lyr"><i class="exp plus"></i><i class="chk"><svg viewBox="0 0 23 23"><path d="M5 10l5 6 8-11" /></svg></i><span v-fit="67" class="fit">Ocean</span></div>
            </div>
            <div class="vscroll">
              <span class="sb"><svg viewBox="0 0 16 12"><path d="M2 10l6-7 6 7" /></svg></span>
              <span class="thumb"><i></i><i></i><i></i></span>
              <span class="track"></span>
              <span class="sb"><svg viewBox="0 0 16 12"><path d="M2 2l6 7 6-7" /></svg></span>
            </div>
          </div>
        </aside>

        <section class="view">
          <div class="upper">
            <div class="left">
              <svg class="hruler" width="1514" height="38" viewBox="543 219 1514 38">
                <rect x="1077" y="223.500" width="486" height="32" fill="#fff" stroke="#aaa" stroke-width="1.500" />
                <g v-for="t in hTicks" :key="t.n">
                  <path :d="`M${t.x} 230v22`" stroke="#333" stroke-width="2" />
                  <path v-if="t.n < 8" :d="`M${t.x + 29.500} 247v5`" stroke="#333" stroke-width="2" />
                  <text :x="t.x + 5" y="244" class="num" textLength="12" lengthAdjust="spacingAndGlyphs">{{ t.n }}</text>
                </g>
                <path v-for="x in hMarks" :key="x" :d="`M${x - 4} 250v-7l2-2h4l2 2v7h4l-7 7h-2l-7-7z`" fill="#f8f8f8" stroke="#333" stroke-width="1.800" />
              </svg>
              <div class="under">
                <svg class="vruler" width="39" height="701" viewBox="543 257 39 701">
                  <rect x="546.500" y="295" width="31" height="630" fill="#fff" stroke="#aaa" stroke-width="1.500" />
                  <g v-for="t in vTicks" :key="t.n">
                    <path :d="`M554 ${t.y}h22`" stroke="#333" stroke-width="2" />
                    <path :d="`M571.500 ${t.y - 28.500}h5`" stroke="#333" stroke-width="2" />
                    <text :transform="`translate(568 ${t.y - 6}) rotate(-90)`" class="num" :textLength="t.n > 9 ? 26 : 12" lengthAdjust="spacingAndGlyphs">{{ t.n }}</text>
                  </g>
                  <path d="M571.500 900h5" stroke="#333" stroke-width="2" />
                  <path v-for="y in vMarks" :key="y" :d="`M573 ${y - 4}h-6l-3 2v4l3 2h6v4l8-7v-2l-8-7z`" fill="#f8f8f8" stroke="#333" stroke-width="1.800" />
                </svg>
                <div class="canvas">
                  <svg width="1472" height="698" viewBox="585 260 1472 698" class="map">
                    <defs>
                      <filter id="sea" x="0" y="0" width="100%" height="100%" color-interpolation-filters="sRGB">
                        <feTurbulence type="fractalNoise" baseFrequency="0.02 0.022" numOctaves="5" seed="8" />
                        <feColorMatrix type="matrix" values="0 0 0 0 0.270  0 0 0 0 0.540  0 0 0 0 0.720  3.200 0 0 0 -1.300" />
                        <feComposite in2="SourceGraphic" operator="in" />
                      </filter>
                      <clipPath id="q"><rect x="98" y="386" width="728" height="870" /></clipPath>
                      <clipPath id="b"><rect x="513" y="63" width="589" height="696" /></clipPath>
                    </defs>
                    <rect x="1075" y="293" width="492" height="634" fill="#fff" stroke="#2b2b2b" stroke-width="2" />
                    <rect x="1263" y="318.500" width="286" height="228.500" fill="#fff" stroke="#222" stroke-width="2" />
                    <g transform="translate(1060 200) scale(.35714 .33333)">
                      <path :d="ausPng" fill="#e4e4e6" />
                      <path d="M830 440l35-12 20-8M1220 405l30-18M1215 372l25 8M1275 405h12M1305 425l20 8M1335 432l25 10M1245 475h10M905 415h12M945 420h15M925 400h12" stroke="#dddde0" stroke-width="7" stroke-dasharray="9 5" fill="none" />
                      <g stroke="#6b6b6d" stroke-width="6" stroke-linejoin="round">
                        <path :d="ausOutline" fill="#e1e0e2" />
                        <path d="M905 535v252M905 698h174v187M1033 553v145M1079 747h108l20-7 46 2M1079 820l35 18 20 12h38l28 20" fill="none" stroke-width="4.500" />
                        <path d="M1116 905l8-2 8 18 22 8 18-4 4-16 8 2-4 40-12 12-20 2-14-16-6-24z" fill="#e1e0e2" />
                        <path d="M922 479h42v8h-38zM1006 482l11-4v28l-9 4zM818 553l17 4-8 14zM1010 826l26 5-6 18-17-3zM683 687h12v16zM1186 840h8l-4 6zM1201 640l8 8zM900 527h16v8z" fill="#6b6b6d" />
                      </g>
                    </g>

                    <g transform="translate(1060 490) scale(.33333)">
                      <g clip-path="url(#q)">
                        <rect x="98" y="385" width="729" height="871" fill="#7db3d8" />
                        <path d="M400 470h427v786H560V840z" fill="#fff" filter="url(#sea)" opacity=".4" />
                        <path d="M125 400l90 0 25 30 30 12 60-2 20-30 10-25H140z" fill="#e2e1e4" />
                        <path d="M415 388l20 25 20 8 20 25 35 30v-90z" fill="#e2e1e4" />
                        <g fill="#e2e1e4" stroke="#6f6f6f" stroke-width="4">
                          <path d="M95 688l45 40v350H95zM95 1078h160v182H95zM255 1191h350l50-8 70-14 10 20-12 40-8 35H255z" />
                        </g>
                        <path :d="qldEdge" fill="#7c6a66" stroke="#5a5a5a" stroke-width="5" />
                        <path v-for="c in qldCells" :key="c[0]" :d="c[1]" :fill="c[0]" />
                        <path d="M240 770l20-25 12-45 4-55 8-55 8-50M480 822l50 28 25 30 22 42 24 30" fill="none" stroke="#5a6468" stroke-width="3" />
                        <g fill="#111">
                          <rect v-for="(s, i) in qldSeeds" :key="i" :x="s[0] - 11 + (i % 3) * 2" :y="s[1] - 2" :width="16 + (i % 4) * 4" height="4" opacity=".6" />
                          <rect v-for="(s, i) in extraLabels" :key="'e' + i" :x="s[0] - 10" :y="s[1]" width="24" height="5" opacity=".8" />
                          <path d="M98 560h8v8h-8zM98 632h8v8h-8z" />
                        </g>
                      </g>
                      <rect x="99" y="386" width="727" height="869" fill="none" stroke="#111" stroke-width="5" />

                      <g clip-path="url(#b)">
                        <path d="M513 62h590v555H915v140H513z" fill="#7db3d8" />
                        <path d="M513 62h590v555H915V500L760 250 620 230 513 250z" fill="#fff" filter="url(#sea)" opacity=".45" />
                        <path d="M513 600h200l120 130v30H513z" fill="#fff" filter="url(#sea)" opacity=".3" />
                        <ellipse cx="880" cy="280" rx="65" ry="26" transform="rotate(12 880 280)" fill="#5c9ac6" opacity=".45" />
                        <path d="M1016 617V762H826V722l24-22 30-60 20-23z" fill="#fff" />
                        <path :d="png" fill="#e4e3e6" />
                        <path d="M835 148l25 5 30-10 12-20 8 4-6 24-28 12-36-3zM582 160l10-12-4-10zM525 190l14-12zM540 180l6 3z" fill="#e4e3e6" stroke="#e4e3e6" stroke-width="3" />
                        <rect v-for="(s, i) in isles" :key="i" :x="s[0]" :y="s[1]" :width="s[2]" height="6" fill="#d9e3ea" />
                        <g fill="#e2e1e4" stroke="#6f6f6f" stroke-width="4">
                          <path :d="nt" /><path :d="sa" /><path :d="nsw" />
                        </g>
                        <path d="M516 247h52l20 5 20 5 25-14v40l-4 25-16-6 2-34-22-6-28 6-22-4-27 14zM600 642l20 14 22 12 10-45 4 30 20 18-6 16-20-10-14 12-14-24z" fill="#6f6f6f" />
                        <path d="M530 258h20v6h-20zM568 256h18v6h-18z" fill="#d8d8da" />
                        <path d="M705 650l30 2 30 22 20 14 50 0 26 22M842 670l14 8-6 8z" fill="none" stroke="#6f6f6f" stroke-width="4" />
                        <path :d="bioEdge" fill="#8a7460" stroke="#666" stroke-width="5" />
                        <path v-for="c in bioCells" :key="c[0]" :d="c[1]" :fill="c[0]" />
                        <rect v-for="(s, i) in bioLabels" :key="'l' + i" :x="s[0] - 18" :y="s[1] - 3" :width="32 + (i % 3) * 3" height="7" fill="#111" />
                      </g>
                      <path d="M513 63h589v309M1016 759H513V62M826 722v37" fill="none" stroke="#111" stroke-width="5" />
                      <path d="M1016 770H502V50h611v322" fill="none" stroke="#a8a8a8" stroke-width="5" stroke-dasharray="22 15" />

                      <rect x="1017.500" y="375" width="450" height="882" fill="#fff" stroke="#858585" stroke-width="5" />
                      <g>
                        <path v-for="(r, i) in legend" :key="i" :d="`M${r.x + 20} ${r.y}H${r.end}`" stroke="#3a3336" stroke-width="6.500" :stroke-dasharray="r.dash" />
                        <path v-for="(r, i) in legend" :key="'k' + i" :d="`M${r.x} ${r.y}h13`" stroke="#3a3336" stroke-width="7" />
                      </g>
                    </g>
                  </svg>

                  <div class="float">
                    <div class="fhead">
                      <span v-fit="88" class="fit">Layout</span>
                      <svg width="16" height="10" viewBox="0 0 16 10"><path d="M1 1h14l-7 7z" fill="#fff" /></svg>
                      <svg width="18" height="18" viewBox="0 0 18 18"><path d="M2 2l14 14M16 2L2 16" stroke="#fff" stroke-width="4.500" /></svg>
                    </div>
                    <div class="fbar">
                      <template v-for="(t, i) in layoutA" :key="i">
                        <span v-if="t[0] === '|'" class="sep" :style="{ width: t[1] + 'px' }"></span>
                        <span v-else class="tb" :style="{ width: t[1] + 'px' }"><svg viewBox="0 0 32 32" v-html="icons[t[0]]"></svg></span>
                      </template>
                      <div class="combo pct"><span v-fit="39" class="fit">30%</span><svg width="18" height="14" viewBox="0 0 18 14"><path d="M2 2l7 9 7-9" /></svg></div>
                      <template v-for="(t, i) in layoutB" :key="i">
                        <span v-if="t[0] === '|'" class="sep" :style="{ width: t[1] + 'px' }"></span>
                        <span v-else class="tb" :style="{ width: t[1] + 'px' }"><svg viewBox="0 0 32 32" v-html="icons[t[0]]"></svg></span>
                      </template>
                    </div>
                  </div>
                </div>
              </div>
            </div>
            <div class="vscroll wide">
              <span class="sb"><svg viewBox="0 0 16 12"><path d="M2 10l6-7 6 7" /></svg></span>
              <span class="track t1"></span>
              <span class="thumb"><i></i><i></i><i></i></span>
              <span class="track"></span>
              <span class="sb"><svg viewBox="0 0 16 12"><path d="M2 2l6 7 6-7" /></svg></span>
            </div>
          </div>
          <div class="hbar">
            <span class="vb"><svg width="18" height="18" viewBox="0 0 18 18"><path d="M2 2h14v14H2z" fill="#8fc25c" stroke="#444" stroke-width="2" /><path d="M3 12L13 3v5l-6 7" fill="#e4f0d0" /></svg></span>
            <span class="vb act"><svg width="18" height="20" viewBox="0 0 18 20"><path d="M3 2h9l3 3v13H3z" fill="#fff" stroke="#444" stroke-width="2" /><path d="M6 7h4M6 11h6M6 14h6" stroke="#456" stroke-width="2" /></svg></span>
            <span class="vb ref"><svg width="18" height="20" viewBox="0 0 18 20"><path d="M2 9q1-6 7-6 4 0 6 3M16 11q-1 6-7 6-4 0-6-3" fill="none" stroke="#24588c" stroke-width="2.600" /><path d="M17 1v8H10zM1 19v-8h7z" fill="#24588c" /></svg></span>
            <span class="vb pau"><svg width="14" height="16" viewBox="0 0 14 16"><path d="M1 1h4v14H1zM9 1h4v14H9z" fill="#3c68b4" /></svg></span>
            <span class="hb"><svg viewBox="0 0 12 16"><path d="M9 2L3 8l6 6" /></svg></span>
            <span class="hthumb"><i></i><i></i><i></i></span>
            <span class="hb"><svg viewBox="0 0 12 16"><path d="M3 2l6 6-6 6" /></svg></span>
          </div>
        </section>

        <div class="tabs">
          <div class="tab cat"><svg viewBox="0 0 32 32" v-html="icons.catalog"></svg><span>Catalog</span></div>
          <div class="tab sea"><svg viewBox="0 0 32 32" v-html="icons.search"></svg><span>Search</span></div>
        </div>
      </main>

      <footer class="status">
        <i class="div"></i>
        <div class="coords"><span v-fit="181" class="fit">15.83&nbsp; 1.01 Inches</span></div>
        <svg width="16" height="20" viewBox="0 0 16 20"><path d="M12 2h3v3h-3zM6 8h3v3H6zM12 8h3v3h-3zM0 15h3v3H0zM6 15h3v3H6zM12 15h3v3h-3z" fill="#bbb" /></svg>
      </footer>
    </div>
  </div>
</template>

<style>
html, body { margin: 0; overflow: hidden; }
</style>

<style scoped>
.window { width: 2147px; height: 1041px; background: #9e9e9e; display: flex; flex-direction: column; font-family: "Open Sans", "Noto Sans", sans-serif; font-size: 24px; color: #1c1c22; box-sizing: border-box; box-shadow: inset 0 2px 0 #808080; }
.fit { display: inline-block; white-space: nowrap; transform-origin: 0 50%; line-height: 1; flex: none; }
svg { display: block; flex: none; }
.titlebar { height: 60px; display: flex; align-items: flex-start; flex: none; }
.logo { width: 33px; height: 33px; margin: 12px 0 0 14px; }
.title { width: 273px; margin: 14px 0 0 890px; font-size: 29px; height: 34px; line-height: 30px; }
.winbtns { display: flex; margin-left: auto; margin-right: 4px; height: 42px; border: 2px solid #4c4c4c; border-top: 0; box-sizing: border-box; }
.wb { display: flex; align-items: center; justify-content: center; border-right: 2px solid #4c4c4c; box-sizing: border-box; }
.min { width: 56px; } .max { width: 53px; }
.close { width: 91px; background: #c5594f; border-right: 0; padding-right: 1px; }
.min i { width: 20px; height: 6px; background: #000; margin-top: 10px; }
.max i { width: 12px; height: 8px; border: 4px solid #000; }

.body { width: 2128px; height: 974px; margin-left: 10px; display: flex; flex-direction: column; background: linear-gradient(90deg, #f0eff1 0, #f3f2f4 30%, #fdfcfe 92%, #fdfdfe); }
.menu { display: flex; gap: 32px; padding-left: 24px; height: 50px; padding-bottom: 2px; align-items: center; flex: none; }
.mi { flex: none; display: flex; }
.bars { height: 102px; display: flex; flex-direction: column; gap: 2px; flex: none; }
.toolbar { margin-left: 5px; height: 48px; display: flex; align-items: center; background: linear-gradient(#fdfdfd, #f1f0f2); border-radius: 5px; align-self: flex-start; }
.second { margin-top: 2px; }
.grip { width: 16px; display: flex; flex-direction: column; gap: 5px; align-items: center; box-sizing: border-box; padding-right: 1px; }
.second .grip { width: 14px; }
.grip i { width: 4px; height: 4px; background: #c0c0c4; }
.tb { height: 44px; display: flex; align-items: center; justify-content: center; flex: none; box-sizing: border-box; }
.tb svg { width: 32px; height: 32px; }
.sep { height: 28px; flex: none; background: linear-gradient(#c4c4c6, #c4c4c6) center / 2px 100% no-repeat; }
.tb.on { border: 2px solid #6aa6dc; background: #e4ecf6; }
.over { width: 22px; height: 47px; background: linear-gradient(#f4f4f4, #a8a8a8); display: flex; align-items: flex-end; justify-content: center; padding-bottom: 4px; box-sizing: border-box; border-radius: 0 3px 3px 0; margin-left: 2px; }
.combo { border: 2px solid #8a8a8e; background: #fff; box-sizing: border-box; display: flex; align-items: center; justify-content: space-between; }
.combo .fit { padding-bottom: 3px; }
.combo path, .sb path, .hb path { fill: none; stroke: #606060; stroke-width: 3; }
.scale { width: 295px; height: 42px; padding: 0 6px 1px 5px; }

.main { display: flex; height: 780px; flex: none; }
.toc { width: 520px; height: 780px; display: flex; flex-direction: column; flex: none; }
.tochead { height: 50px; background: linear-gradient(90deg, #bfcddd, #d6e4f1); display: flex; align-items: center; padding: 0 9px 0 8px; font-size: 29px; }
.tochead .fit { padding-top: 2px; }
.tochead svg:nth-of-type(1) { margin-left: auto; margin-right: 15px; }
.toctools { height: 52px; display: flex; align-items: center; padding-left: 8px; background: linear-gradient(#fdfdfd, #f3f2f4); }
.toctools .tb + .tb { position: relative; left: 1px; }
.toctools .tb svg { width: 34px; height: 34px; }
.tree { height: 677px; box-sizing: border-box; border: 2px solid #8f8f92; margin: 0 3px 0 0; background: #fff; display: flex; padding: 2px 1px 1px 0; }
.rows { width: 478px; overflow: hidden; }
.row { height: 36px; display: flex; align-items: center; line-height: 36px; }
.row .fit { position: relative; top: -1px; }
.exp { width: 18px; height: 18px; border: 2px solid #b0b0b0; box-sizing: border-box; background: linear-gradient(#555, #555) center / 9px 2px no-repeat, #ececec; flex: none; position: relative; top: 3px; }
.plus { background: linear-gradient(#555, #555) center / 10px 2px no-repeat, linear-gradient(#555, #555) center / 2px 10px no-repeat, #ececec; }
.root { padding-left: 16px; }
.lay { width: 32px; height: 28px; margin: 0 6px 1px 11px; }
.hl { width: 126px; height: 36px; background: #3399ff; color: #fff; font-weight: 700; display: flex; align-items: center; padding-left: 5px; box-sizing: border-box; flex: none; }
.lyr { padding-left: 54px; }
.chk { width: 23px; height: 23px; border: 2px solid #222; box-sizing: border-box; margin: 1px 16px 0 15px; flex: none; }
.chk svg { width: 19px; height: 19px; }
.chk path { fill: none; stroke: #000; stroke-width: 4; }
.fld { padding-left: 164px; }
.cls { padding-left: 118px; }
.sw { width: 28px; height: 21px; margin-right: 8px; flex: none; }

.vscroll { width: 34px; display: flex; flex-direction: column; background: #fdfdfd; border: 1px solid #c4c4c4; box-sizing: border-box; flex: none; }
.sb { height: 32px; display: flex; align-items: center; justify-content: center; border: 1px solid #c4c4c4; background: #fff; flex: none; }
.sb svg { width: 16px; height: 12px; }
.thumb { height: 386px; background: #dcdcdc; border: 2px solid #b0b0b0; box-sizing: border-box; display: flex; flex-direction: column; gap: 3px; align-items: center; justify-content: center; flex: none; }
.thumb i { width: 14px; height: 3px; background: #777; }
.track { flex: 1; }

.view { margin-left: 10px; width: 1550px; height: 780px; display: flex; flex-direction: column; border-top: 5px solid #858588; border-left: 3px solid #808084; box-sizing: border-box; background: #f0eff1; flex: none; }
.upper { height: 739px; display: flex; }
.left { width: 1514px; flex: none; display: flex; flex-direction: column; }
.hruler, .vruler { overflow: visible; }
.under { display: flex; height: 701px; }
.num { font-size: 25px; fill: #333; }
.canvas { width: 1475px; height: 701px; box-sizing: border-box; border-top: 3px solid #7c7c80; border-left: 3px solid #7c7c80; background: #fefefe; position: relative; }
.map { overflow: hidden; }
.float { position: absolute; left: 33px; top: 18px; width: 739px; height: 97px; box-sizing: border-box; border: 4px solid #8c8c8e; padding: 2px; background: #f0eff1; display: flex; flex-direction: column; }
.fhead { height: 40px; background: #9e9e9f; display: flex; align-items: center; padding: 0 12px 0 4px; font-size: 28px; color: #f0f0f6; }
.fhead svg:nth-of-type(1) { margin-left: auto; margin-right: 20px; }
.fhead svg { position: relative; top: -1px; }
.fbar { height: 45px; display: flex; align-items: center; background: linear-gradient(#fafafa, #efeef0); }
.pct { width: 120px; height: 42px; padding: 0 5px 1px 4px; }

.wide { width: 33px; border-width: 0 2px 0 1px; }
.wide .t1 { flex: 0 0 141px; }
.wide .thumb { height: 390px; border-width: 2px 0; }

.hbar { height: 34px; display: flex; align-items: center; padding-bottom: 1px; box-sizing: border-box; }
.vb { width: 33px; height: 32px; display: flex; align-items: center; justify-content: center; box-sizing: border-box; flex: none; padding-right: 4px; }
.act { width: 34px; border: 2px solid #48a8d4; background: #dcecf8; margin-left: 1px; padding: 0; }
.ref { margin-left: 15px; padding-right: 2px; }
.pau { margin-left: 0; margin-right: 3px; padding-right: 0; }
.hb { width: 32px; height: 31px; background: #fff; border: 1px solid #c4c4c4; box-sizing: border-box; display: flex; align-items: center; justify-content: center; flex: none; }
.hb svg { width: 12px; height: 16px; }
.hthumb { width: 1292px; height: 31px; background: #dcdcdc; border: 2px solid #b0b0b0; box-sizing: border-box; display: flex; gap: 3px; align-items: center; justify-content: center; margin-right: 3px; padding-right: 4px; flex: none; }
.hthumb i { width: 3px; height: 14px; background: #777; }

.tabs { margin-left: 9px; width: 39px; padding-top: 5px; display: flex; flex-direction: column; }
.tab { border: 2px solid #b4b4b6; border-right: 0; border-radius: 6px 0 0 6px; background: #f2f1f3; box-sizing: border-box; display: flex; flex-direction: column; align-items: center; padding-top: 7px; }
.tab + .tab { margin-top: 1px; }
.cat { height: 142px; } .sea { height: 134px; }
.tab svg { width: 32px; height: 32px; }
.tab span { writing-mode: vertical-rl; font-size: 23px; line-height: 30px; color: #76767a; margin-top: 8px; letter-spacing: 0.4px; }

.status { height: 40px; background: linear-gradient(90deg, #f0eff1, #efeef0); display: flex; align-items: center; }
.div { width: 2px; height: 32px; background: #e9e8eb; margin-left: 1020px; }
.coords { width: 181px; margin-left: 563px; margin-top: 5px; display: flex; }
.status svg { margin-left: auto; margin-right: 4px; margin-top: 8px; }
</style>
